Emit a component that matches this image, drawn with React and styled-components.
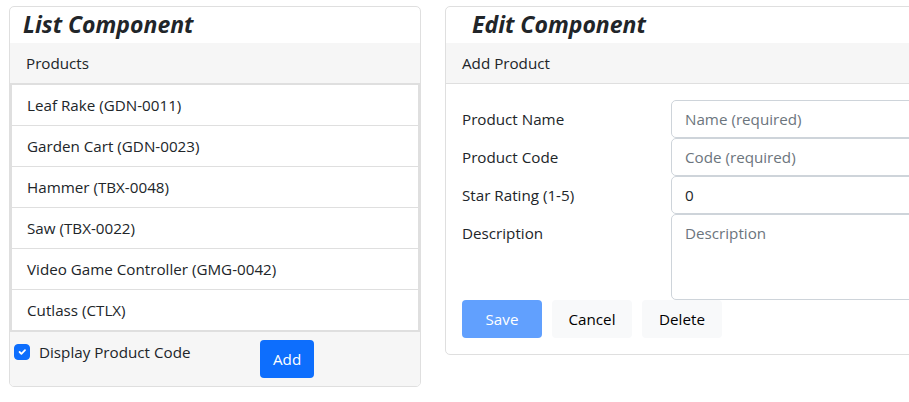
import React, { useState } from 'react';
import styled, { createGlobalStyle } from 'styled-components';

const GlobalStyle = createGlobalStyle`
    html, body {
        margin: 0;
        padding: 0;
        background: #fff;
    }
    body {
        font-family: "Open Sans", "Noto Sans", sans-serif;
        font-size: 15.2px;
        line-height: 24px;
        color: #212529;
    }
    * { box-sizing: border-box; }
`;

const Page = styled.div`
    display: flex;
    align-items: flex-start;
    gap: 24px;
    padding: 6px 0 16px 9px;
    width: 100vw;
    overflow: hidden;
`;

const Card = styled.div`
    width: ${p => p.width}px;
    flex-shrink: 0;
    border: 1px solid #dfdfdf;
    border-radius: 5px;
    background: #fff;
    overflow: hidden;
`;

const Title = styled.h2`
    margin: 0;
    padding-left: ${p => p.indent}px;
    height: 36px;
    font-size: 23px;
    line-height: 34px;
    font-weight: 700;
    font-style: italic;
`;

const CardHeader = styled.div`
    background: #f6f6f6;
    padding: 8px 16px;
    border-bottom: 1px solid #dfdfdf;
    height: 41px;
`;

const ListGroup = styled.ul`
    list-style: none;
    margin: 0;
    padding: 0;
    border: 1px solid #dfdfdf;
    border-right-width: 2px;
    border-left-width: 2px;
`;

const ListItem = styled.li`
    height: 41px;
    padding: 8px 15px;
    border-bottom: 1px solid #dfdfdf;
    &:last-child { border-bottom: 0; height: 40px; }
`;

const Footer = styled.div`
    display: grid;
    grid-template-columns: 246px auto;
    align-items: start;
    justify-items: start;
    background: #f6f6f6;
    border-top: 1px solid #dfdfdf;
    padding: 8px 0 8px 4px;
`;

const CheckLabel = styled.label`
    display: flex;
    align-items: center;
    gap: 9px;
    cursor: pointer;
`;

const CheckBox = styled.span`
    width: 16px;
    height: 16px;
    border-radius: 4px;
    background: ${p => (p.checked ? '#0d6efd' : '#fff')};
    border: 1px solid ${p => (p.checked ? '#0d6efd' : '#ced4da')};
    display: flex;
    align-items: center;
    justify-content: center;
`;

const Button = styled.button`
    font-family: inherit;
    font-size: 15.2px;
    line-height: 24px;
    height: 38px;
    padding: 6px 12px;
    border: 1px solid transparent;
    border-radius: 4px;
    cursor: pointer;
    width: ${p => (p.wide ? '80px' : 'auto')};
    background: ${p => (p.variant === 'primary' ? '#0d6efd' : p.variant === 'muted' ? '#61a0fe' : '#f8f9fa')};
    color: ${p => (p.variant === 'light' ? '#000' : '#fff')};
`;

const CardBody = styled.div`
    padding: 16px;
`;

const FormRow = styled.div`
    display: grid;
    grid-template-columns: 209px 1fr;
`;

const Label = styled.div`
    padding-top: 7px;
`;

const Input = styled.input`
    font-family: inherit;
    font-size: 15.2px;
    height: 38px;
    padding: 6px 13px;
    border: 1px solid #ced4da;
    border-radius: 5px;
    color: #212529;
    outline: none;
    &::placeholder { color: #6c757d; }
`;

const TextArea = styled.textarea`
    font-family: inherit;
    font-size: 15.2px;
    line-height: 24px;
    height: 86px;
    padding: 6px 13px;
    border: 1px solid #ced4da;
    border-radius: 5px;
    resize: none;
    outline: none;
    &::placeholder { color: #6c757d; }
`;

const ButtonRow = styled.div`
    display: flex;
    gap: 10px;
`;

const products = [
    { name: 'Leaf Rake', code: 'GDN-0011' },
    { name: 'Garden Cart', code: 'GDN-0023' },
    { name: 'Hammer', code: 'TBX-0048' },
    { name: 'Saw', code: 'TBX-0022' },
    { name: 'Video Game Controller', code: 'GMG-0042' },
    { name: 'Cutlass', code: 'CTLX' },
];

export default function App() {
    const [showCode, setShowCode] = useState(true);
    return (
        <>
            <GlobalStyle />
            <Page>
                <Card width={412}>
                    <Title indent={13}>List Component</Title>
                    <CardHeader>Products</CardHeader>
                    <ListGroup>
                        {products.map(p => (
                            <ListItem key={p.code}>
                                {p.name}{showCode ? ` (${p.code})` : ''}
                            </ListItem>
                        ))}
                    </ListGroup>
                    <Footer>
                        <CheckLabel onClick={() => setShowCode(!showCode)}>
                            <CheckBox checked={showCode}>
                                {showCode && (
                                    <svg width="12" height="12" viewBox="0 0 20 20">
                                        <path d="M6 10l3 3 6-6" fill="none" stroke="#fff" strokeWidth="3" strokeLinecap="round" strokeLinejoin="round" />
                                    </svg>
                                )}
                            </CheckBox>
                            Display Product Code
                        </CheckLabel>
                        <Button variant="primary">Add</Button>
                    </Footer>
                </Card>
                <Card width={640}>
                    <Title indent={26}>Edit Component</Title>
                    <CardHeader>Add Product</CardHeader>
                    <CardBody>
                        <FormRow>
                            <Label>Product Name</Label>
                            <Input placeholder="Name (required)" />
                        </FormRow>
                        <FormRow>
                            <Label>Product Code</Label>
                            <Input placeholder="Code (required)" />
                        </FormRow>
                        <FormRow>
                            <Label>Star Rating (1-5)</Label>
                            <Input defaultValue="0" />
                        </FormRow>
                        <FormRow>
                            <Label>Description</Label>
                            <TextArea placeholder="Description" />
                        </FormRow>
                        <ButtonRow>
                            <Button variant="muted" wide>Save</Button>
                            <Button variant="light" wide>Cancel</Button>
                            <Button variant="light" wide>Delete</Button>
                        </ButtonRow>
                    </CardBody>
                </Card>
            </Page>
        </>
    );
}
